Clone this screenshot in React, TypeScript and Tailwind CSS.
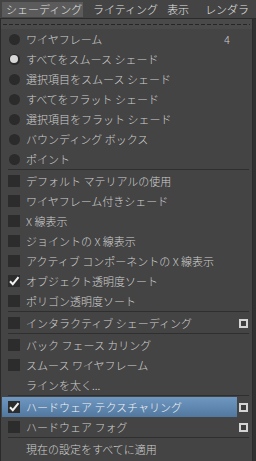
import React from "react";

type Item =
  | { kind: "sep" }
  | {
      kind: "radio" | "check" | "none";
      label: string;
      checked?: boolean;
      option?: boolean;
      highlight?: boolean;
      right?: string;
    };

const items: Item[] = [
  { kind: "radio", label: "ワイヤフレーム", right: "4" },
  { kind: "radio", label: "すべてをスムース シェード", checked: true },
  { kind: "radio", label: "選択項目をスムース シェード" },
  { kind: "radio", label: "すべてをフラット シェード" },
  { kind: "radio", label: "選択項目をフラット シェード" },
  { kind: "radio", label: "バウンディング ボックス" },
  { kind: "radio", label: "ポイント" },
  { kind: "sep" },
  { kind: "check", label: "デフォルト マテリアルの使用" },
  { kind: "check", label: "ワイヤフレーム付きシェード" },
  { kind: "check", label: "X 線表示" },
  { kind: "check", label: "ジョイントの X 線表示" },
  { kind: "check", label: "アクティブ コンポーネントの X 線表示" },
  { kind: "check", label: "オブジェクト透明度ソート", checked: true },
  { kind: "check", label: "ポリゴン透明度ソート" },
  { kind: "sep" },
  { kind: "check", label: "インタラクティブ シェーディング", option: true },
  { kind: "sep" },
  { kind: "check", label: "バック フェース カリング" },
  { kind: "check", label: "スムース ワイヤフレーム" },
  { kind: "none", label: "ラインを太く..." },
  { kind: "sep" },
  { kind: "check", label: "ハードウェア テクスチャリング", checked: true, option: true, highlight: true },
  { kind: "check", label: "ハードウェア フォグ", option: true },
  { kind: "sep" },
  { kind: "none", label: "現在の設定をすべてに適用" },
];

function Check() {
  return (
    <svg width="12" height="12" viewBox="0 0 12 12" className="block">
      <path d="M2 6.2 L4.8 9.2 L10.5 2.2" fill="none" stroke="#f2f2f2" strokeWidth="2" />
    </svg>
  );
}

function Row({ it }: { it: Exclude<Item, { kind: "sep" }> }) {
  return (
    <div className="flex h-[20px]">
      <div
        className={
          "ml-[1px] flex w-[235px] items-center pl-[6px] " +
          (it.highlight
            ? "bg-[linear-gradient(180deg,#6e97c1,#52789f)] text-[#f4f4f4]"
            : "text-[#cfcfcf]")
        }
      >
        <div className="flex h-[12px] w-[12px] items-center justify-center">
          {it.kind === "radio" &&
            (it.checked ? (
              <div className="flex h-[11px] w-[11px] items-center justify-center rounded-full bg-[#2a2a2a]">
                <div className="h-[8px] w-[8px] rounded-full bg-[#d8d8d8]" />
              </div>
            ) : (
              <div className="h-[11px] w-[11px] rounded-full bg-[#2b2b2b]" />
            ))}
          {it.kind === "check" && (
            <div className="flex h-[12px] w-[12px] items-center justify-center bg-[#2c2c2c]">
              {it.checked && <Check />}
            </div>
          )}
        </div>
        <span className="ml-[6px] whitespace-pre leading-[20px]">{it.label}</span>
        {it.right && <span className="ml-auto mr-[7px] leading-[20px]">{it.right}</span>}
      </div>
      <div className="flex w-[15px] items-center">
        {it.option && (
          <div className="ml-[2px] h-[9px] w-[9px] border-[2px] border-[#d4d4d4] bg-[#3e3e3e]" />
        )}
      </div>
    </div>
  );
}

export default function App() {
  return (
    <div className="h-[461px] w-[256px] overflow-hidden bg-[#303030] font-['Noto_Sans_CJK_JP','Liberation_Sans',sans-serif] text-[11px] font-light">
      <div className="flex h-[19px] items-start border-b border-[#2b2b2b] bg-[#444444] text-[#e2e2e2]">
        <div className="ml-[2px] mt-[2px] flex h-[15px] w-[81px] items-center bg-[#5b5b5b] pl-[4px] leading-[15px]">
          シェーディング
        </div>
        <div className="ml-[10px] mt-[2px] leading-[15px]">ライティング</div>
        <div className="ml-[9px] mt-[2px] leading-[15px]">表示</div>
        <div className="ml-[16px] mt-[2px] leading-[15px]">レンダラ</div>
      </div>
      <div className="h-[442px] w-[253px] border-x border-[#2a2a2a] bg-[#444444]">
        <div className="h-[10px] bg-[#4a4a4a] pt-[5px]">
          <div className="mx-[2px] h-[1px] bg-[repeating-linear-gradient(90deg,#262626_0px,#262626_4px,transparent_4px,transparent_6px)]" />
        </div>
        {items.map((it, i) =>
          it.kind === "sep" ? (
            <div key={i} className="h-[2px]">
              <div className="ml-[7px] h-[1px] w-[241px] bg-[#2f2f2f]" />
            </div>
          ) : (
            <Row key={i} it={it} />
          )
        )}
      </div>
    </div>
  );
}
